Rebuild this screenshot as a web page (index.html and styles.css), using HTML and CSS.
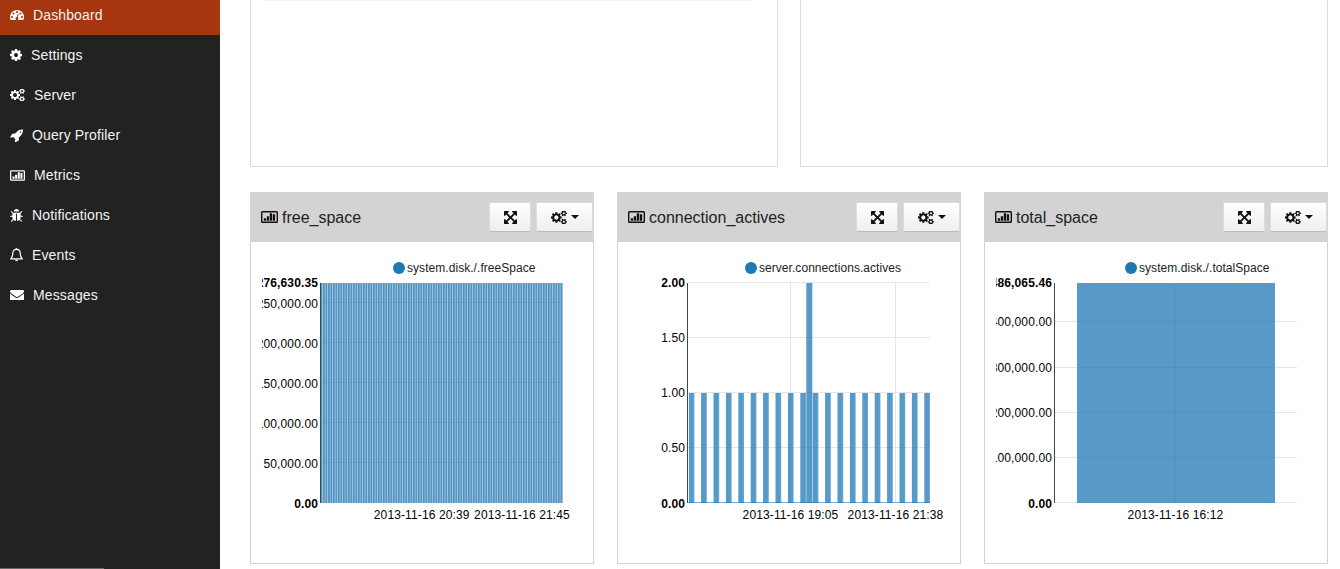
FILE: index.html
```html
<!DOCTYPE html>
<html lang="en">
<head>
    <meta charset="UTF-8">
    <meta name="viewport" content="width=device-width, initial-scale=1.0">
    <title>Dashboard</title>
    <link rel="stylesheet" href="styles.css">
</head>
<body>
    <!-- icon set -->
    <svg class="icon-defs" xmlns="http://www.w3.org/2000/svg">
        <symbol id="i-dashboard" viewBox="0 256 1792 1280"><path d="M384 1152q0-53-37.500-90.500t-90.500-37.500-90.500 37.500-37.500 90.500 37.500 90.500 90.500 37.500 90.500-37.500 37.500-90.500zm192-448q0-53-37.500-90.500t-90.500-37.500-90.500 37.500-37.500 90.500 37.500 90.500 90.500 37.500 90.500-37.500 37.500-90.500zm428 481l101-382q6-26-7.500-48.500t-38.500-29.500-48 6.500-30 39.500l-101 382q-60 5-107 43.500t-63 98.500q-20 77 20 146t117 89 146-20 89-117q16-60-6-117t-72-91zm660-33q0-53-37.500-90.500t-90.500-37.500-90.500 37.500-37.500 90.500 37.500 90.500 90.500 37.500 90.500-37.500 37.500-90.500zm-640-640q0-53-37.500-90.500t-90.500-37.500-90.500 37.500-37.500 90.500 37.500 90.500 90.500 37.500 90.500-37.500 37.500-90.500zm448 192q0-53-37.500-90.500t-90.500-37.500-90.500 37.500-37.500 90.500 37.500 90.500 90.500 37.500 90.500-37.500 37.500-90.500zm320 448q0 261-141 483-19 29-54 29h-1402q-35 0-54-29-141-221-141-483 0-182 71-348t191-286 286-191 348-71 348 71 286 191 191 286 71 348z"/></symbol>
        <symbol id="i-cog" viewBox="128 128 1536 1536"><path d="M1152 896q0-106-75-181t-181-75-181 75-75 181 75 181 181 75 181-75 75-181zm512-109v222q0 12-8 23t-20 13l-185 28q-19 54-39 91 35 50 107 138 10 12 10 25t-9 23q-27 37-99 108t-94 71q-12 0-26-9l-138-108q-44 23-91 38-16 136-29 186-7 28-36 28h-222q-14 0-24.500-8.500t-11.500-21.500l-28-184q-49-16-90-37l-141 107q-10 9-25 9-14 0-25-11-126-114-165-168-7-10-7-23 0-12 8-23 15-21 51-66.500t54-70.500q-27-50-41-99l-183-27q-13-2-21-12.500t-8-23.500v-222q0-12 8-23t19-13l186-28q14-46 39-92-40-57-107-138-10-12-10-24 0-10 9-23 26-36 98.500-107.500t94.500-71.500q13 0 26 10l138 107q44-23 91-38 16-136 29-186 7-28 36-28h222q14 0 24.500 8.500t11.500 21.500l28 184q49 16 90 37l142-107q9-9 24-9 13 0 25 10 129 119 165 170 7 8 7 22 0 12-8 23-15 21-51 66.500t-54 70.500q26 50 41 98l183 28q13 2 21 12.500t8 23.500z"/></symbol>
        <symbol id="i-cogs" viewBox="0 128 1920 1536"><path d="M896 896q0-106-75-181t-181-75-181 75-75 181 75 181 181 75 181-75 75-181zm768 512q0-52-38-90t-90-38-90 38-38 90q0 53 37.500 90.500t90.500 37.500 90.500-37.500 37.500-90.500zm0-1024q0-52-38-90t-90-38-90 38-38 90q0 53 37.500 90.500t90.500 37.500 90.500-37.500 37.500-90.500zm-384 421v185q0 10-7 19.500t-16 10.500l-155 24q-11 35-32 76 34 48 90 115 7 11 7 20 0 12-7 19-23 30-82.500 89.500t-78.500 59.500q-11 0-21-7l-115-90q-37 19-77 31-11 108-23 155-7 24-30 24h-186q-11 0-20-7.500t-10-17.500l-23-153q-34-10-75-31l-118 89q-7 7-20 7-11 0-21-8-144-133-144-160 0-9 7-19 10-14 41-53t47-61q-23-44-35-82l-152-24q-10-1-17-9.500t-7-19.500v-185q0-10 7-19.500t16-10.500l155-24q11-35 32-76-34-48-90-115-7-11-7-20 0-12 7-20 22-30 82-89t79-59q11 0 21 7l115 90q34-18 77-32 11-108 23-154 7-24 30-24h186q11 0 20 7.500t10 17.500l23 153q34 10 75 31l118-89q8-7 20-7 11 0 21 8 144 133 144 160 0 8-7 19-12 16-42 54t-45 60q23 48 34 82l152 23q10 2 17 10.500t7 19.500zm640 533v140q0 16-149 31-12 27-30 52 51 113 51 138 0 4-4 7-122 71-124 71-8 0-46-47t-52-68q-20 2-30 2t-30-2q-14 21-52 68t-46 47q-2 0-124-71-4-3-4-7 0-25 51-138-18-25-30-52-149-15-149-31v-140q0-16 149-31 13-29 30-52-51-113-51-138 0-4 4-7 4-2 35-20t59-34 30-16q8 0 46 46.500t52 67.500q20-2 30-2t30 2q51-71 92-112l6-2q4 0 124 70 4 3 4 7 0 25-51 138 17 23 30 52 149 15 149 31zm0-1024v140q0 16-149 31-12 27-30 52 51 113 51 138 0 4-4 7-122 71-124 71-8 0-46-47t-52-68q-20 2-30 2t-30-2q-14 21-52 68t-46 47q-2 0-124-71-4-3-4-7 0-25 51-138-18-25-30-52-149-15-149-31v-140q0-16 149-31 13-29 30-52-51-113-51-138 0-4 4-7 4-2 35-20t59-34 30-16q8 0 46 46.500t52 67.500q20-2 30-2t30 2q51-71 92-112l6-2q4 0 124 70 4 3 4 7 0 25-51 138 17 23 30 52 149 15 149 31z"/></symbol>
        <symbol id="i-rocket" viewBox="64 64 1664 1664"><path d="M1504 448q0-40-28-68t-68-28-68 28-28 68 28 68 68 28 68-28 28-68zm224-288q0 249-75.500 430.500t-253.500 360.500q-81 80-195 176l-20 379q-2 16-16 26l-384 224q-7 4-16 4-12 0-23-9l-64-64q-13-14-8-32l85-276-281-281-276 85q-3 1-9 1-14 0-23-9l-64-64q-17-19-5-39l224-384q10-14 26-16l379-20q96-114 176-195 188-187 358-258t431-71q14 0 24 9.500t10 22.500z"/></symbol>
        <symbol id="i-chart" viewBox="0 0 17 12"><path d="M1.500 0h14a1.500 1.500 0 0 1 1.500 1.500v9a1.500 1.500 0 0 1-1.500 1.500h-14a1.500 1.500 0 0 1-1.500-1.500v-9a1.500 1.500 0 0 1 1.500-1.500zm-.1 1.400v9.200h14.200v-9.200zM2.800 7.200h2.300v2.500h-2.300zm3-2h2.300v4.500h-2.300zm3-3h2.300v7.500h-2.300zm3 1h2.300v6.500h-2.300z" fill-rule="evenodd"/></symbol>
        <symbol id="i-bug" viewBox="96 64 1600 1600"><path d="M1696 960q0 26-19 45t-45 19h-224q0 171-67 290l208 209q19 19 19 45t-19 45q-18 19-45 19t-45-19l-198-197q-5 5-15 13t-42 28.500-65 36.500-82 29-97 13v-896h-128v896q-51 0-101.500-13.500t-87-33-66-39-43.500-32.500l-15-14-183 207q-20 21-48 21-24 0-43-16-19-18-20.500-44.500t15.500-46.500l202-227q-58-114-58-274h-224q-26 0-45-19t-19-45 19-45 45-19h224v-294l-173-173q-19-19-19-45t19-45 45-19 45 19l173 173h844l173-173q19-19 45-19t45 19 19 45-19 45l-173 173v294h224q26 0 45 19t19 45zm-480-576h-640q0-133 93.500-226.500t226.500-93.500 226.500 93.500 93.500 226.500z"/></symbol>
        <symbol id="i-bell" viewBox="0 0 13 14"><path d="M6.500 1.300c-2.400 0-3.700 1.700-3.700 3.800 0 2.900-.8 4.500-2 5.700h11.400c-1.200-1.200-2-2.800-2-5.700 0-2.100-1.300-3.800-3.700-3.800z" fill="none" stroke="currentColor" stroke-width="1.200"/><path d="M5.700 .2h1.600v1.300h-1.600zM5 11.600h3c0 1-.7 1.700-1.500 1.700s-1.500-.7-1.500-1.700z"/></symbol>
        <symbol id="i-envelope" viewBox="0 256 1792 1280"><path d="M1792 710v794q0 66-47 113t-113 47h-1472q-66 0-113-47t-47-113v-794q44 49 101 87 362 246 497 345 57 42 92.500 65.500t94.500 48 110 24.500h2q51 0 110-24.500t94.500-48 92.500-65.500q170-123 498-345 57-39 100-87zm0-294q0 79-49 151t-122 123q-376 261-468 325-10 7-42.500 30.500t-54 38-52 32.500-57.500 27-50 9h-2q-23 0-50-9t-57.500-27-52-32.500-54-38-42.500-30.500q-91-64-262-182.500t-205-142.500q-62-42-117-115.500t-55-136.500q0-78 41.500-130t118.500-52h1472q65 0 112.500 47t47.500 113z"/></symbol>
        <symbol id="i-expand" viewBox="128 128 1536 1536"><path d="M1411 541l-355 355 355 355 144-144q29-31 70-14 39 17 39 59v448q0 26-19 45t-45 19h-448q-42 0-59-40-17-39 14-69l144-144-355-355-355 355 144 144q31 30 14 69-17 40-59 40h-448q-26 0-45-19t-19-45v-448q0-42 40-59 39-17 69 14l144 144 355-355-355-355-144 144q-19 19-45 19-12 0-24-5-40-17-40-59v-448q0-26 19-45t45-19h448q42 0 59 40 17 39-14 69l-144 144 355 355 355-355-144-144q-31-30-14-69 17-40 59-40h448q26 0 45 19t19 45v448q0 42-39 59-13 5-25 5-26 0-45-19z"/></symbol>
    </svg>

    <div class="layout">
        <nav class="sidebar">
            <a class="nav-item active"><svg class="icon" width="14" height="10"><use href="#i-dashboard"/></svg>Dashboard</a>
            <a class="nav-item"><svg class="icon" width="12" height="12"><use href="#i-cog"/></svg>Settings</a>
            <a class="nav-item"><svg class="icon" width="15" height="12"><use href="#i-cogs"/></svg>Server</a>
            <a class="nav-item"><svg class="icon" width="13" height="13"><use href="#i-rocket"/></svg>Query Profiler</a>
            <a class="nav-item"><svg class="icon" width="15" height="11"><use href="#i-chart"/></svg>Metrics</a>
            <a class="nav-item"><svg class="icon" width="13" height="13"><use href="#i-bug"/></svg>Notifications</a>
            <a class="nav-item"><svg class="icon" width="13" height="14"><use href="#i-bell"/></svg>Events</a>
            <a class="nav-item"><svg class="icon" width="14" height="10"><use href="#i-envelope"/></svg>Messages</a>
        </nav>

        <main class="content">
            <div class="row-top">
                <div class="blank-panel"><div class="blank-rule"></div></div>
                <div class="blank-panel"></div>
            </div>

            <div class="row-charts">
                <!-- free_space -->
                <section class="panel">
                    <header class="panel-head">
                        <svg class="icon" width="17" height="12"><use href="#i-chart"/></svg>
                        <h4>free_space</h4>
                        <button class="btn btn-expand"><svg class="icon" width="13" height="13"><use href="#i-expand"/></svg></button>
                        <button class="btn btn-menu"><svg class="icon" width="16" height="13"><use href="#i-cogs"/></svg><span class="caret"></span></button>
                    </header>
                    <div class="panel-body">
                        <svg class="chart" width="332" height="321">
                            <defs>
                                <pattern id="stripes" x="59.500" y="0" width="2.500" height="10" patternUnits="userSpaceOnUse">
                                    <rect width="2" height="10" class="bar-solid"/>
                                </pattern>
                            </defs>
                            <circle class="dot" cx="138" cy="26" r="6"/>
                            <text class="legend" x="146" y="30">system.disk./.freeSpace</text>
                            <line class="grid" x1="60" x2="302" y1="60.500" y2="60.500"/>
                            <line class="grid" x1="60" x2="302" y1="100.500" y2="100.500"/>
                            <line class="grid" x1="60" x2="302" y1="140.500" y2="140.500"/>
                            <line class="grid" x1="60" x2="302" y1="180.500" y2="180.500"/>
                            <line class="grid" x1="60" x2="302" y1="220.500" y2="220.500"/>
                            <rect x="60" y="41" width="242" height="220" fill="url(#stripes)"/>
                            <rect class="bar-wash" x="60" y="41" width="242" height="220"/>
                            <line class="axis" x1="59.500" x2="59.500" y1="41" y2="261"/>
                            <text class="tick strong" x="57" y="45">276,630.35</text>
                            <text class="tick" x="57" y="66">250,000.00</text>
                            <text class="tick" x="57" y="106">200,000.00</text>
                            <text class="tick" x="57" y="146">150,000.00</text>
                            <text class="tick" x="57" y="186">100,000.00</text>
                            <text class="tick" x="57" y="226">50,000.00</text>
                            <text class="tick strong" x="57" y="266">0.00</text>
                            <text class="tick-x" x="160.700" y="277">2013-11-16 20:39</text>
                            <text class="tick-x" x="261" y="277">2013-11-16 21:45</text>
                        </svg>
                    </div>
                </section>

                <!-- connection_actives -->
                <section class="panel">
                    <header class="panel-head">
                        <svg class="icon" width="17" height="12"><use href="#i-chart"/></svg>
                        <h4>connection_actives</h4>
                        <button class="btn btn-expand"><svg class="icon" width="13" height="13"><use href="#i-expand"/></svg></button>
                        <button class="btn btn-menu"><svg class="icon" width="16" height="13"><use href="#i-cogs"/></svg><span class="caret"></span></button>
                    </header>
                    <div class="panel-body">
                        <svg class="chart" width="332" height="321">
                            <defs>
                                <pattern id="conn-bars" x="60.700" y="0" width="12.400" height="10" patternUnits="userSpaceOnUse">
                                    <rect width="5.600" height="10" class="bar-solid"/>
                                </pattern>
                            </defs>
                            <circle class="dot" cx="123" cy="26" r="6"/>
                            <text class="legend" x="131" y="30">server.connections.actives</text>
                            <line class="grid" x1="60" x2="302" y1="40.500" y2="40.500"/>
                            <line class="grid" x1="60" x2="302" y1="95.500" y2="95.500"/>
                            <line class="grid" x1="60" x2="302" y1="150.500" y2="150.500"/>
                            <line class="grid" x1="60" x2="302" y1="205.500" y2="205.500"/>
                            <line class="grid" x1="162.500" x2="162.500" y1="41" y2="261"/>
                            <line class="grid" x1="267.500" x2="267.500" y1="41" y2="261"/>
                            <rect x="60.700" y="151" width="241.300" height="110" fill="url(#conn-bars)"/>
                            <rect class="bar-solid" x="178.300" y="41" width="6" height="220"/>
                            <line class="baseline" x1="60" x2="302" y1="260.500" y2="260.500"/>
                            <line class="axis" x1="59.500" x2="59.500" y1="41" y2="261"/>
                            <text class="tick strong" x="57" y="45">2.00</text>
                            <text class="tick" x="57" y="100">1.50</text>
                            <text class="tick" x="57" y="155">1.00</text>
                            <text class="tick" x="57" y="210">0.50</text>
                            <text class="tick strong" x="57" y="266">0.00</text>
                            <text class="tick-x" x="162.500" y="277">2013-11-16 19:05</text>
                            <text class="tick-x" x="267.500" y="277">2013-11-16 21:38</text>
                        </svg>
                    </div>
                </section>

                <!-- total_space -->
                <section class="panel">
                    <header class="panel-head">
                        <svg class="icon" width="17" height="12"><use href="#i-chart"/></svg>
                        <h4>total_space</h4>
                        <button class="btn btn-expand"><svg class="icon" width="13" height="13"><use href="#i-expand"/></svg></button>
                        <button class="btn btn-menu"><svg class="icon" width="16" height="13"><use href="#i-cogs"/></svg><span class="caret"></span></button>
                    </header>
                    <div class="panel-body">
                        <svg class="chart" width="332" height="321">
                            <circle class="dot" cx="136" cy="26" r="6"/>
                            <text class="legend" x="144" y="30">system.disk./.totalSpace</text>
                            <line class="grid" x1="60" x2="302" y1="79.500" y2="79.500"/>
                            <line class="grid" x1="60" x2="302" y1="125.500" y2="125.500"/>
                            <line class="grid" x1="60" x2="302" y1="170.500" y2="170.500"/>
                            <line class="grid" x1="60" x2="302" y1="215.500" y2="215.500"/>
                            <line class="grid" x1="60" x2="302" y1="260.500" y2="260.500"/>
                            <line class="grid" x1="180.500" x2="180.500" y1="41" y2="261"/>
                            <rect class="bar-solid" x="82" y="41" width="198" height="220"/>
                            <line class="axis" x1="59.500" x2="59.500" y1="41" y2="261"/>
                            <text class="tick strong" x="57" y="45">486,065.46</text>
                            <text class="tick" x="57" y="84">400,000.00</text>
                            <text class="tick" x="57" y="130">300,000.00</text>
                            <text class="tick" x="57" y="175">200,000.00</text>
                            <text class="tick" x="57" y="220">100,000.00</text>
                            <text class="tick strong" x="57" y="266">0.00</text>
                            <text class="tick-x" x="180.500" y="277">2013-11-16 16:12</text>
                        </svg>
                    </div>
                </section>
            </div>
        </main>
    </div>
</body>
</html>
```

FILE: styles.css
```css
* {
    box-sizing: border-box;
}
html, body {
    height: 100%;
}
body {
    margin: 0;
    font-family: "Liberation Sans", Arial, sans-serif;
    background-color: #fff;
    color: #000;
    overflow: hidden;
}
.icon-defs {
    display: none;
}
.icon {
    fill: currentColor;
    flex: none;
    display: block;
}
.layout {
    display: flex;
    height: 100%;
}

/* sidebar */
.sidebar {
    position: relative;
    width: 220px;
    flex: none;
    background-color: #222;
    margin-top: -5px;
}
/* scrollbar sliver along the bottom edge */
.sidebar::after {
    content: "";
    position: absolute;
    left: 0;
    bottom: 0;
    width: 104px;
    height: 1px;
    background-color: #666;
}
.nav-item {
    display: flex;
    align-items: center;
    gap: 9px;
    height: 40px;
    padding-left: 10px;
    color: #f2f2f2;
    font-size: 14px;
    letter-spacing: 0.13px;
}
.nav-item .icon {
    color: #fff;
}
.nav-item.active {
    background-color: #a5360f;
}

/* main area */
.content {
    flex: 1;
    min-width: 0;
    padding: 0 12px 0 30px;
    margin-top: -5px;
}
.row-top {
    display: flex;
    gap: 22px;
    margin-bottom: 25px;
}
.blank-panel {
    flex: 1;
    height: 172px;
    border: 1px solid #ddd;
}
.blank-rule {
    width: 486px;
    height: 1px;
    margin: 4px 0 0 14px;
    background-color: #f0f0f0;
}
.row-charts {
    display: flex;
    gap: 23px;
}
.panel {
    width: 344px;
    height: 372px;
    border: 1px solid #d3d3d3;
    border-top: none;
}
.panel-head {
    display: flex;
    align-items: center;
    height: 50px;
    margin: 0 -1px;
    padding: 0 1px 0 11px;
    background-color: #d3d3d3;
    color: #111;
}
.panel-head h4 {
    flex: 1;
    margin: 0 0 0 4px;
    padding-top: 2px;
    font-size: 16px;
    font-weight: normal;
    color: #222;
}
.btn {
    display: flex;
    align-items: center;
    justify-content: center;
    height: 30px;
    padding: 0;
    background-color: #f5f5f5;
    background-image: linear-gradient(#fff, #eee);
    border: 1px solid #ddd;
    border-bottom-color: #bbb;
    border-radius: 2px;
    color: #111;
}
.btn-expand {
    width: 42px;
    margin-right: 5px;
}
.btn-menu {
    width: 57px;
    gap: 4px;
}
.caret {
    border-top: 4px solid #111;
    border-left: 4px solid transparent;
    border-right: 4px solid transparent;
}
.panel-body {
    padding-left: 10px;
}

/* charts */
.chart {
    display: block;
    font-size: 12px;
    clip-path: inset(0 0 0 1px);
}
.grid {
    stroke: #e5e5e5;
    stroke-width: 1;
}
.axis {
    stroke: #444;
    stroke-width: 1;
}
.baseline {
    stroke: #1f77b4;
    stroke-opacity: 0.6;
}
.bar-solid {
    fill: #1f77b4;
    fill-opacity: 0.75;
}
.bar-wash {
    fill: #1f77b4;
    fill-opacity: 0.12;
}
.dot {
    fill: #1f77b4;
}
.legend {
    fill: #222;
    font-size: 12px;
    letter-spacing: 0.05px;
}
.tick {
    fill: #000;
    text-anchor: end;
    letter-spacing: 0.12px;
}
.tick.strong {
    font-weight: bold;
}
.tick-x {
    fill: #000;
    text-anchor: middle;
    letter-spacing: 0.12px;
}
```
